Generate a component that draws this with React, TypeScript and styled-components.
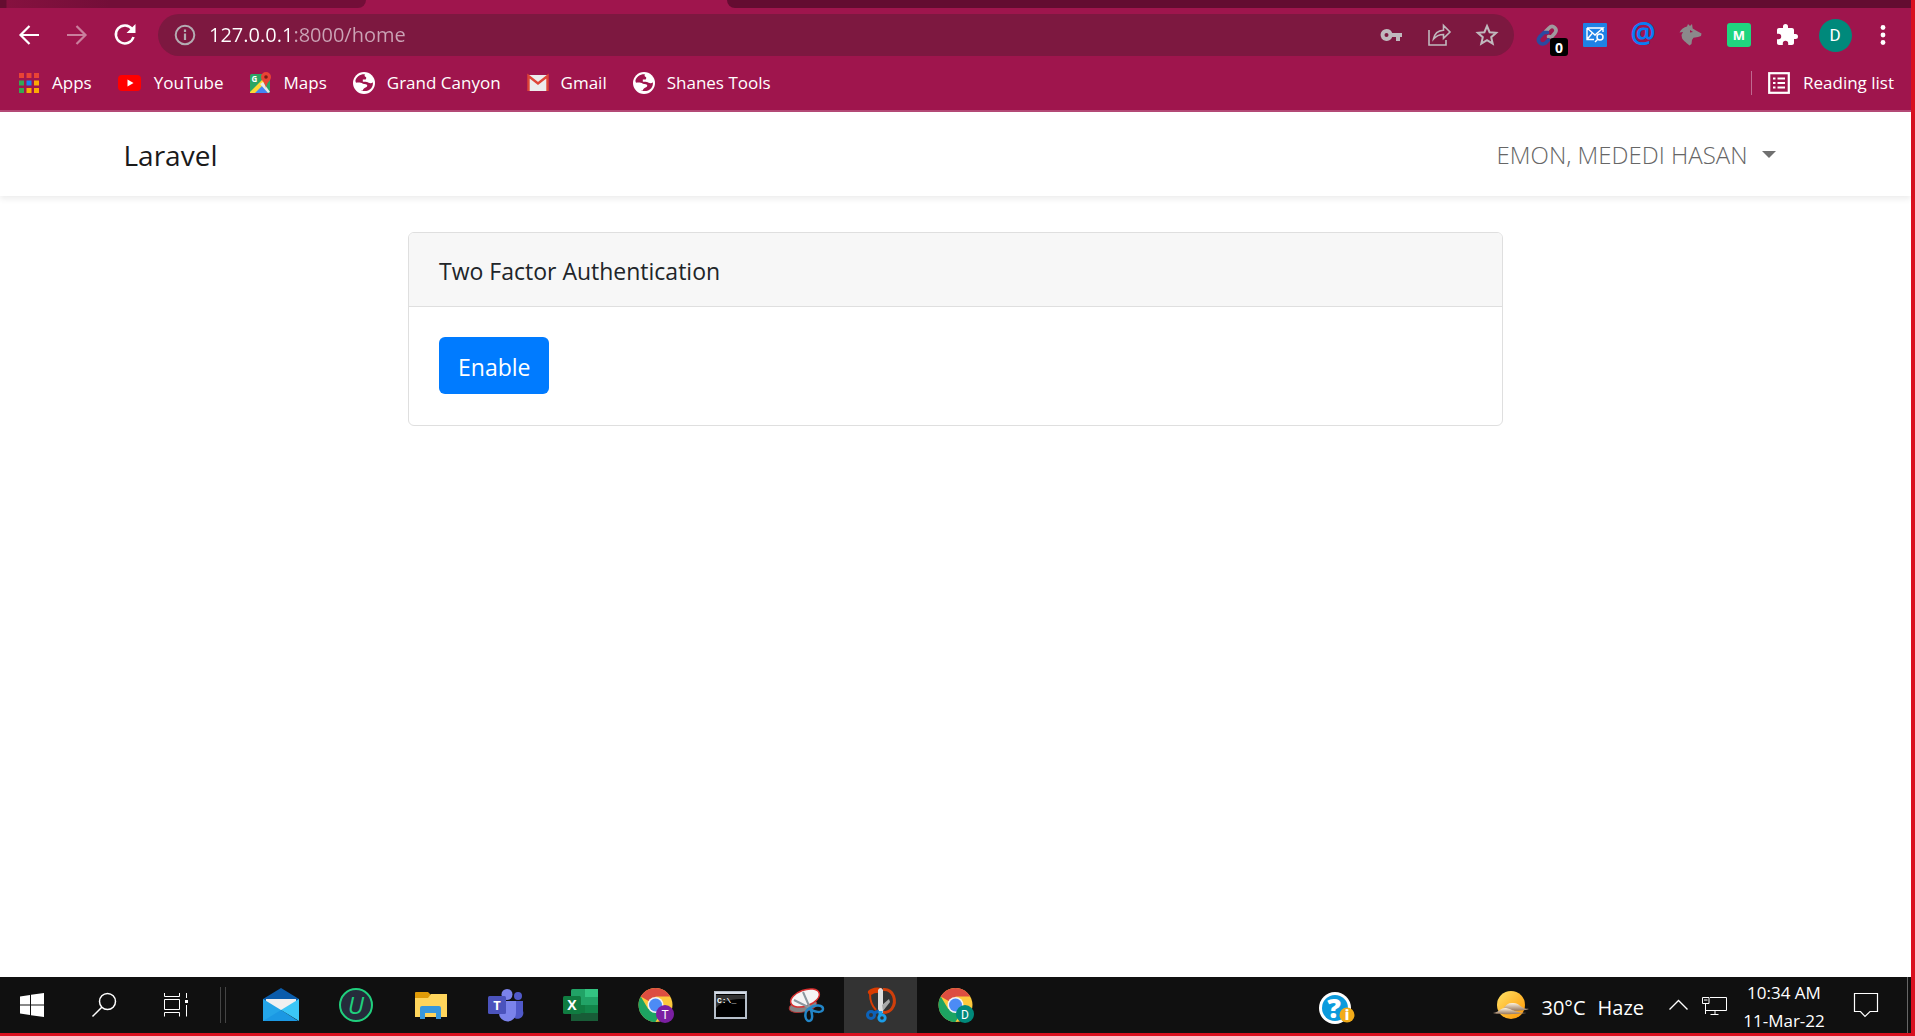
import React from "react";
import styled, { createGlobalStyle } from "styled-components";

const GlobalStyle = createGlobalStyle`
  * { box-sizing: border-box; }
  body { margin: 0; background: #fff; font-family: "Open Sans", "Noto Sans", sans-serif; }
  button { font: inherit; color: inherit; background: none; border: 0; padding: 0; cursor: pointer; }
  a { color: inherit; text-decoration: none; }
  svg { display: block; flex: none; overflow: visible; }
`;

const Screen = styled.div`
  min-height: 100vh;
  display: flex;
  flex-direction: column;
  border-right: 4px solid #d9101f;
  border-bottom: 3px solid #d9101f;
`;

/* Browser chrome */
const Chrome = styled.header`
  background: #9f154d;
  color: #fff;
  border-bottom: 2px solid #b54a77;
`;
const TabStrip = styled.div`
  display: flex;
  height: 8px;
`;
const InactiveTab = styled.div`
  width: 366px;
  background: linear-gradient(90deg, #650d30 0 6px, #86113f 7px, #730e38 110px);
  border-bottom-right-radius: 8px;
`;
const ActiveTab = styled.div`
  width: 361px;
`;
const StripRest = styled.div`
  flex: 1;
  background: #640c31;
  border-bottom-left-radius: 8px;
`;
const Toolbar = styled.div`
  display: flex;
  align-items: center;
  height: 54px;
  padding: 0 4px 0 5px;
`;
const ToolButton = styled.button<{ $dim?: boolean }>`
  width: 48px;
  height: 42px;
  display: flex;
  align-items: center;
  justify-content: center;
  position: relative;
  opacity: ${(p) => (p.$dim ? 0.45 : 1)};
`;
const Omnibox = styled.form`
  flex: 1;
  height: 42px;
  margin: 0 9px;
  padding: 0 3px 0 16px;
  border-radius: 21px;
  background: #7d1840;
  display: flex;
  align-items: center;
  color: #c2bcc0;
`;
const Address = styled.input`
  flex: 1;
  min-width: 0;
  margin-left: 13px;
  padding: 0;
  border: 0;
  outline: 0;
  font: 20px/28px "Open Sans", "Noto Sans", sans-serif;
  color: #fff;
  background: linear-gradient(90deg, #fff 0 83px, #cba3b5 83px);
  background-clip: text;
  -webkit-text-fill-color: transparent;
`;
const LinkCount = styled.span`
  position: absolute;
  right: 3px;
  bottom: 0;
  width: 18px;
  height: 18px;
  border-radius: 3px;
  background: #000;
  font: bold 14px/19px "Open Sans", sans-serif;
  text-align: center;
`;
const Avatar = styled.span`
  width: 33px;
  height: 33px;
  border-radius: 50%;
  background: #00897b;
  font: 17px/33px Roboto, sans-serif;
  text-align: center;
`;
const Bookmarks = styled.nav`
  display: flex;
  align-items: center;
  gap: 26px;
  height: 48px;
  padding: 0 17px 6px 18px;
  font-size: 17px;
  line-height: 24px;
`;
const Bookmark = styled.a`
  display: flex;
  align-items: center;
  gap: 12px;
  white-space: nowrap;
`;
const ReadingList = styled.button`
  margin-left: auto;
  height: 24px;
  padding-left: 16px;
  border-left: 1px solid #c0698f;
  display: flex;
  align-items: center;
  gap: 13px;
`;

/* Web page */
const Navbar = styled.nav`
  background: #fff;
  box-shadow: 0 3px 6px rgba(0, 0, 0, 0.075);
`;
const Container = styled.div`
  max-width: 1710px;
  margin: 0 auto;
  padding: 0 23px;
`;
const NavRow = styled(Container)`
  height: 84px;
  display: flex;
  align-items: center;
  justify-content: space-between;
  padding-top: 1px;
`;
const Brand = styled.a`
  font-size: 28px;
  line-height: 40px;
  color: #1a1a1a;
`;
const UserMenu = styled.button`
  display: flex;
  align-items: center;
  gap: 14px;
  margin-right: 12px;
  font-size: 24px;
  line-height: 36px;
  font-weight: 300;
  color: #666;
`;
const Main = styled.main`
  flex: 1;
  padding-top: 36px;
`;
const Card = styled.section`
  max-width: 1095px;
  margin: 0 auto;
  border: 1px solid #dfdfdf;
  border-radius: 6px;
  overflow: hidden;
`;
const CardHeader = styled.h1`
  margin: 0;
  padding: 20px 30px 17px;
  background: #f7f7f7;
  border-bottom: 1px solid #dfdfdf;
  font-size: 23px;
  line-height: 36px;
  font-weight: 400;
  color: #212529;
`;
const CardBody = styled.div`
  padding: 30px 30px 31px;
`;
const EnableButton = styled.button`
  height: 57px;
  padding: 2px 19px 0;
  border-radius: 6px;
  background: #007bff;
  color: #fff;
  font-size: 23px;
`;

/* Taskbar */
const Taskbar = styled.footer`
  height: 56px;
  display: flex;
  align-items: center;
  background: #101010;
  color: #fff;
`;
const SystemButtons = styled.div`
  display: flex;
  gap: 8px;
`;
const SystemButton = styled.button`
  width: 64px;
  height: 56px;
  display: grid;
  place-items: center;
`;
const Divider = styled.div`
  width: 6px;
  height: 36px;
  margin: 0 18px 0 12px;
  border: solid #444;
  border-width: 0 1px;
`;
const TaskApps = styled.div`
  display: flex;
  gap: 2px;
`;
const TaskApp = styled.button<{ $active?: boolean }>`
  width: 73px;
  height: 56px;
  display: grid;
  place-items: center;
  background: ${(p) => (p.$active ? "#333" : "transparent")};
`;
const Tray = styled.div`
  margin-left: auto;
  height: 56px;
  display: flex;
  align-items: center;
`;
const HelpButton = styled.button`
  margin-right: 138px;
  padding-top: 5px;
`;
const Weather = styled.button`
  display: flex;
  align-items: center;
  gap: 12px;
  margin-right: 25px;
  font-size: 20px;
  line-height: 28px;
  & > span { padding-top: 6px; }
`;
const TrayIcons = styled.div`
  display: flex;
  align-items: center;
  gap: 14px;
  margin-right: 15px;
`;
const Clock = styled.button`
  width: 84px;
  height: 56px;
  margin-right: 28px;
  font-size: 17px;
  line-height: 28px;
  white-space: nowrap;
  display: flex;
  flex-direction: column;
  align-items: center;
  padding-top: 2px;
`;
const ShowDesktop = styled.button`
  width: 4px;
  height: 56px;
  margin-left: 29px;
  border-left: 1px solid #666;
`;

const Svg = ({ w = 24, h, box, children }: { w?: number; h?: number; box?: string; children: React.ReactNode }) => (
  <svg width={w} height={h ?? w} viewBox={box ?? `0 0 ${w} ${h ?? w}`} fill="none" aria-hidden="true">
    {children}
  </svg>
);

const Globe = () => (
  <Svg w={22} box="0 0 24 24">
    <circle cx="12" cy="12" r="12" fill="#fff" />
    <path d="M13 2.6C8 2.2 3.800 5 2.600 9.500c.2 2.200 1.400 3 3.200 3h3.600c1.700 0 2 1.500 1.200 2.500-1.200 1.200-.2 3.200-1.700 4.900 2 1.500 8 1.500 11-2.200 1.500-2 2-4 1.800-6.500-1 1.200-2.200 1.500-3.600.9-1.500-.7-2.400-1.600-4.400-1.600h-3V8.200h2.200c1.500 0 1.500-1.300 1.500-2.300 0-1.300-2.700-.7-1.400-3.300z" fill="#9f154d" />
    <path d="M4.500 11.500c2 0 5-.2 6 1.300l3.500.6c2 .3 2.200 2.600.3 3.300-1.700.6-3.300 1.600-3.500 3.500C6 20 2.500 16 2.500 12z" fill="#fff" />
  </Svg>
);

const ChromeLogo = ({ letter, color }: { letter: string; color: string }) => (
  <Svg w={36}>
    <circle cx="17.500" cy="18" r="17" fill="#fdc93c" />
    <path d="M17.500 18 2.800 9.500A17 17 0 0 1 32.200 9.500H17.500z" fill="#dc4e41" />
    <path d="M2.800 9.500A17 17 0 0 0 17.500 35l7.300-12.800L17.500 18 10.200 22z" fill="#1da462" />
    <circle cx="17.500" cy="18" r="8" fill="#f3f3f3" />
    <circle cx="17.500" cy="18" r="6.500" fill="#4c8bf5" />
    <circle cx="27" cy="27" r="9" fill={color} />
    <text x="27" y="31.500" fontFamily="Roboto, sans-serif" fontSize="12" fill="#fff" textAnchor="middle">{letter}</text>
  </Svg>
);

const appsColors = ["#ea4335", "#ea4335", "#ea4335", "#34a853", "#1a82f0", "#fbab05", "#34a853", "#fbab05", "#fbab05"];

export default function App() {
  return (
    <Screen>
      <GlobalStyle />
      <Chrome>
        <TabStrip>
          <InactiveTab />
          <ActiveTab />
          <StripRest />
        </TabStrip>
        <Toolbar>
          <ToolButton aria-label="Back">
            <Svg w={20}><path d="M20 10H2M10.500 1 1.500 10l9 9" stroke="#fff" strokeWidth="2.200" /></Svg>
          </ToolButton>
          <ToolButton aria-label="Forward" $dim>
            <Svg w={20}><path d="M0 10h18M9.500 1l9 9-9 9" stroke="#fff" strokeWidth="2.200" /></Svg>
          </ToolButton>
          <ToolButton aria-label="Reload">
            <Svg w={22}>
              <path d="M18.200 5.200A9 9 0 1 0 19.500 13" stroke="#fff" strokeWidth="2.500" />
              <path d="M21.500 0v9h-9z" fill="#fff" />
            </Svg>
          </ToolButton>
          <Omnibox onSubmit={(e) => e.preventDefault()}>
            <Svg w={22}>
              <circle cx="11" cy="11" r="9.300" stroke="#b4acb2" strokeWidth="2" />
              <path d="M11 9.500V16M11 5.500V8" stroke="#b4acb2" strokeWidth="2.200" />
            </Svg>
            <Address aria-label="Address" defaultValue="127.0.0.1:8000/home" />
            <ToolButton type="button" aria-label="Passwords">
              <Svg w={22} h={14}>
                <path fillRule="evenodd" d="M6.500 1a6 6 0 1 0 5.700 8H16v4h4V9h2V5H12.200A6 6 0 0 0 6.500 1zm0 4a2 2 0 1 1 0 4 2 2 0 0 1 0-4z" fill="#c0b9bd" />
              </Svg>
            </ToolButton>
            <ToolButton type="button" aria-label="Share">
              <Svg w={23} h={22}>
                <path d="M1 6v15h17v-5M5.500 15C6.500 9.500 10 6.500 15.500 6.200V1.500L22 8l-6.500 6.300V10.500c-4 0-7 1-10 4.500z" stroke="#c0b9bd" strokeWidth="1.600" />
              </Svg>
            </ToolButton>
            <ToolButton type="button" aria-label="Bookmark this page">
              <Svg w={22}>
                <path d="M11 2l2.600 6.200 6.600.6-5 4.400 1.500 6.500-5.700-3.500-5.700 3.500 1.500-6.500-5-4.400 6.600-.6z" stroke="#c0b9bd" strokeWidth="2" />
              </Svg>
            </ToolButton>
          </Omnibox>
          <ToolButton aria-label="Link extension">
            <Svg w={22}>
              <g strokeWidth="3.600" strokeLinecap="round">
                <path d="M9.500 7.500 13 4c4-4 9 1 6 5l-3.500 4-3-.5" stroke="#a09a9e" />
                <path d="M11.500 8.500 8 8.500 3.500 13c-3 4 1 9 6 6l3-3" stroke="#2a4ba0" />
              </g>
            </Svg>
            <LinkCount>0</LinkCount>
          </ToolButton>
          <ToolButton aria-label="Mail finder">
            <Svg>
              <rect width="24" height="24" rx="1" fill="#1e82e6" />
              <path d="M11 16.500H4V5M4 5l8 7 8-7H4M4 16.500l5-6M20 5v4" stroke="#fff" strokeWidth="1.400" />
              <circle cx="17" cy="14" r="3" stroke="#fff" strokeWidth="1.500" />
              <path d="m15 16-3 3" stroke="#fff" strokeWidth="1.500" />
            </Svg>
          </ToolButton>
          <ToolButton aria-label="At sign extension">
            <Svg>
              <text x="12" y="20" fontFamily="Open Sans, sans-serif" fontWeight="700" fontSize="28" fill="#087cf5" textAnchor="middle">@</text>
            </Svg>
          </ToolButton>
          <ToolButton aria-label="Wolf extension">
            <Svg>
              <path d="M.5 9.500C2 6 5 4.500 8 3.500L9 1l2 2 2-2 .7 4.500 3.300 2 5.500 3-.5 2.500-3 1-4.500.8-1.500 2.200-.5 4-2 1.500C6.500 19 3.500 17 3 15l-.5-3 1.500-3z" fill="#8b898b" />
              <path d="m11 7 3 2-3 .5z" fill="#9f154d" />
            </Svg>
          </ToolButton>
          <ToolButton aria-label="M extension">
            <Svg>
              <rect width="24" height="24" rx="3" fill="#1fd57f" />
              <text x="12" y="17" fontFamily="Open Sans, sans-serif" fontWeight="700" fontSize="13" fill="#fff" textAnchor="middle">M</text>
            </Svg>
          </ToolButton>
          <ToolButton aria-label="Extensions">
            <Svg w={24} box="0 0 24 24">
              <path d="M20.500 11H19V7c0-1.100-.9-2-2-2h-4V3.500a2.500 2.500 0 0 0-5 0V5H4c-1.100 0-2 .9-2 2v3.800h1.500a2.700 2.700 0 0 1 0 5.400H2V20c0 1.100.9 2 2 2h3.800v-1.500a2.700 2.700 0 0 1 5.400 0V22H17c1.100 0 2-.9 2-2v-4h1.500a2.500 2.500 0 0 0 0-5z" fill="#fff" />
            </Svg>
          </ToolButton>
          <ToolButton aria-label="Profile"><Avatar>D</Avatar></ToolButton>
          <ToolButton aria-label="Menu">
            <Svg w={6} h={20}>
              {[2.5, 10, 17.5].map((y) => <circle key={y} cx="3" cy={y} r="2.400" fill="#fff" />)}
            </Svg>
          </ToolButton>
        </Toolbar>
        <Bookmarks>
          <Bookmark href="#apps">
            <Svg w={22}>
              {appsColors.map((c, i) => (
                <rect key={i} x={1 + (i % 3) * 7.5} y={1 + Math.floor(i / 3) * 7.5} width="5" height="5" fill={c} />
              ))}
            </Svg>
            Apps
          </Bookmark>
          <Bookmark href="#youtube">
            <Svg w={24} h={18}><rect y="1" width="23" height="16" rx="4" fill="#f00" /><path d="m9.500 5.500 6 3.500-6 3.500z" fill="#fff" /></Svg>
            YouTube
          </Bookmark>
          <Bookmark href="#maps">
            <Svg w={22}>
              <rect y="2" width="20" height="19" rx="1.500" fill="#2aa563" />
              <path d="m10 11 8 10H2z" fill="#4285f4" />
              <path d="m0 20 13-13 3 3L5 21H0z" fill="#fdd835" />
              <path d="m10 12 3-2 7 10-2 1z" fill="#e9e9e9" />
              <path d="M16 0a5 5 0 0 0-5 5c0 4 4 4 5 11 1-7 5-7 5-11a5 5 0 0 0-5-5z" fill="#e94335" />
              <circle cx="16" cy="5" r="1.800" fill="#7a1c14" />
              <text x="1.500" y="10" fontFamily="Open Sans, sans-serif" fontSize="8" fontWeight="700" fill="#fff">G</text>
            </Svg>
            Maps
          </Bookmark>
          <Bookmark href="#grand-canyon"><Globe />Grand Canyon</Bookmark>
          <Bookmark href="#gmail">
            <Svg w={22} h={18}>
              <rect x="1" y="1" width="20" height="16" rx="1" fill="#ececec" />
              <path d="M1.500 17V2L11 9.500 20.500 2v15" stroke="#df4537" strokeWidth="2.400" />
            </Svg>
            Gmail
          </Bookmark>
          <Bookmark href="#shanes-tools"><Globe />Shanes Tools</Bookmark>
          <ReadingList>
            <Svg w={22}>
              <rect x="1.200" y="1.200" width="19.600" height="19.600" stroke="#fff" strokeWidth="2.200" />
              <path d="M5 6.500h2.500M5 11h2.500M5 15.500h2.500M9.500 6.500H17M9.500 11H17M9.500 15.500H17" stroke="#fff" strokeWidth="2.200" />
            </Svg>
            Reading list
          </ReadingList>
        </Bookmarks>
      </Chrome>

      <Navbar>
        <NavRow>
          <Brand href="#home">Laravel</Brand>
          <UserMenu>
            EMON, MEDEDI HASAN
            <Svg w={14} h={7}><path d="M0 0h14L7 7z" fill="#707070" /></Svg>
          </UserMenu>
        </NavRow>
      </Navbar>
      <Main>
        <Card>
          <CardHeader>Two Factor Authentication</CardHeader>
          <CardBody><EnableButton>Enable</EnableButton></CardBody>
        </Card>
      </Main>

      <Taskbar>
        <SystemButtons>
          <SystemButton aria-label="Start">
            <Svg><path d="M0 3.500 10 2v9.500H0zM11 1.800 24 0v11.500H11zM0 12.500h10V22L0 20.500zM11 12.500h13V24l-13-1.800z" fill="#fff" /></Svg>
          </SystemButton>
          <SystemButton aria-label="Search">
            <Svg><circle cx="15.500" cy="8.500" r="8" stroke="#fff" strokeWidth="1.500" /><path d="M9.800 14.200.5 23.500" stroke="#fff" strokeWidth="1.500" /></Svg>
          </SystemButton>
          <SystemButton aria-label="Task view">
            <Svg>
              <path d="M.5 0v3.500h15V0M.5 6.500h15v10H.5zM.5 23.500v-4h15v4M22.500 0v5M22.500 12v11.500" stroke="#fff" />
              <rect x="21" y="7" width="3" height="3" fill="#fff" />
            </Svg>
          </SystemButton>
        </SystemButtons>
        <Divider />
        <TaskApps>
          <TaskApp aria-label="Mail">
            <Svg w={36} h={34}>
              <path d="M0 11 18 0l18 11v4H0z" fill="#0a5cab" />
              <path d="M3 11h30v11H3z" fill="#f0f0f0" />
              <path d="M0 11v22h35L18 22z" fill="#24a5e8" />
              <path d="M36 11v22L18 22z" fill="#3bc7f7" />
              <path d="m18 22 17 11H0z" fill="#168fe0" opacity=".6" />
            </Svg>
          </TaskApp>
          <TaskApp aria-label="Uninstaller">
            <Svg w={36}>
              <circle cx="18" cy="18" r="16" fill="#252b3b" stroke="#20cf7d" strokeWidth="2" />
              <text x="18" y="27" fontFamily="Open Sans, sans-serif" fontStyle="italic" fontSize="24" fill="#20cf7d" textAnchor="middle">U</text>
            </Svg>
          </TaskApp>
          <TaskApp aria-label="File Explorer">
            <Svg w={32} h={28}>
              <path d="M0 8V2Q0 1 1 1h12l3 3v4z" fill="#e09b07" />
              <path d="M0 7h13l3-4h16v23H0z" fill="#ffd55c" />
              <path d="M5 28V17q0-2 2-2h17q2 0 2 2v11h-5v-6H10v6z" fill="#3797dd" />
            </Svg>
          </TaskApp>
          <TaskApp aria-label="Teams">
            <Svg w={36} h={32}>
              <circle cx="19" cy="5.500" r="5.500" fill="#7b83eb" />
              <circle cx="30" cy="7" r="4" fill="#5059c9" />
              <path d="M24 12h11v10a5 5 0 0 1-11 4z" fill="#5059c9" />
              <path d="M11 12h17v12a8 8 0 0 1-17 0z" fill="#7b83eb" />
              <rect y="7" width="18" height="18" rx="1.500" fill="#4b53bc" />
              <text x="9" y="21" fontFamily="Open Sans, sans-serif" fontWeight="700" fontSize="13" fill="#fff" textAnchor="middle">T</text>
            </Svg>
          </TaskApp>
          <TaskApp aria-label="Excel">
            <Svg w={36} h={32}>
              <rect x="8" width="27" height="32" rx="1.500" fill="#21a366" />
              <path d="M22 0h13v8H22z" fill="#33c481" />
              <path d="M8 16h14v8H8z" fill="#107c41" />
              <path d="M22 16h13v8H22z" fill="#12864a" />
              <path d="M8 24h27v8H8z" fill="#185c37" />
              <rect y="7" width="18" height="18" rx="1.500" fill="#107c41" />
              <text x="9" y="21" fontFamily="Open Sans, sans-serif" fontWeight="700" fontSize="14" fill="#fff" textAnchor="middle">X</text>
            </Svg>
          </TaskApp>
          <TaskApp aria-label="Chrome, profile T"><ChromeLogo letter="T" color="#7b1fa2" /></TaskApp>
          <TaskApp aria-label="Command Prompt">
            <Svg w={33} h={28}>
              <rect x="1" y="1" width="31" height="26" fill="#000" stroke="#b5bec9" strokeWidth="2" />
              <path d="M1 1h31v2H1z" fill="#d5dce6" />
              <path d="M2 17C9 9 19 8 31 8V4H2z" fill="#333" />
              <text x="3" y="12" fontFamily="Liberation Mono, monospace" fontWeight="700" fontSize="8" fill="#fff">C:\_</text>
            </Svg>
          </TaskApp>
          <TaskApp aria-label="Snipping Tool">
            <Svg w={36} h={34}>
              <ellipse cx="15" cy="18" rx="14" ry="6" transform="rotate(-12 15 18)" fill="#858585" stroke="#a33" />
              <ellipse cx="17" cy="10" rx="15" ry="8" transform="rotate(-20 17 10)" fill="#f5f5f5" stroke="#d92f2f" strokeWidth="1.500" />
              <path d="M15 4l7 16M6 12l16 8" stroke="#8b979f" strokeWidth="2" />
              <path d="M22 20c-7 3-5 13-1 13s4-7 1-13zm0 0c5-4 13-3 13 1s-9 4-13-1z" stroke="#2286c8" strokeWidth="2.500" />
            </Svg>
          </TaskApp>
          <TaskApp aria-label="Snip and Sketch" $active>
            <Svg w={30} h={36}>
              <path d="M4 7c0 7 2 12 6 16" stroke="#d83b01" strokeWidth="2" />
              <path d="M2 4Q7-1 16 1v5Q9 5 5 8 1 7 2 4z" fill="#d83b01" />
              <path d="M17 2.500c11-1 14 12 9 19-2 3-5 4-9 4" stroke="#cf3f0b" strokeWidth="3" />
              <path d="M12 3q2.500-4 5 0v23h-5z" fill="#dedede" />
              <path d="m16 18 7-6 1 3-7 9z" fill="#aaa" />
              <circle cx="5" cy="28" r="3.500" stroke="#0d62b8" strokeWidth="3" />
              <path d="m8 26 5-2" stroke="#0d62b8" strokeWidth="3" />
              <path d="M12.500 24h4v5h-4z" fill="#1b9de8" />
              <circle cx="16" cy="31" r="3.200" stroke="#1b9de8" strokeWidth="2.800" />
            </Svg>
          </TaskApp>
          <TaskApp aria-label="Chrome, profile D"><ChromeLogo letter="D" color="#00897b" /></TaskApp>
        </TaskApps>
        <Tray>
          <HelpButton aria-label="Help">
            <Svg w={36} h={32}>
              <circle cx="16" cy="16" r="16" fill="#fff" />
              <circle cx="16" cy="16" r="13" fill="#0c9bdd" />
              <text x="15" y="26" fontFamily="Open Sans, sans-serif" fontWeight="800" fontSize="27" fill="#fff" textAnchor="middle">?</text>
              <circle cx="28" cy="23" r="7.500" fill="#f2ab19" />
              <text x="28" y="28" fontFamily="Open Sans, sans-serif" fontWeight="800" fontSize="14" fill="#fff" textAnchor="middle">i</text>
            </Svg>
          </HelpButton>
          <Weather>
            <Svg w={36} h={28}>
              <defs>
                <linearGradient id="sun" x1="0" y1="0" x2="1" y2="1"><stop stopColor="#ffe268" /><stop offset="1" stopColor="#ff9500" /></linearGradient>
                <linearGradient id="cloud" x1="0" y1="0" x2="0" y2="1"><stop stopColor="#fff4e0" /><stop offset="1" stopColor="#987960" /></linearGradient>
              </defs>
              <circle cx="18" cy="14" r="14" fill="url(#sun)" />
              <path d="M8 19c4-1 4-7 11-7 8-1 8 6 17 6-4 2-18 2-28 1z" fill="url(#cloud)" />
              <path d="M0 22c7-1 7-5 12-5 6 0 7 4 21 5-5 1-28 2-33 0z" fill="url(#cloud)" />
            </Svg>
            <span>30°C</span>
            <span>Haze</span>
          </Weather>
          <TrayIcons>
            <Svg w={19} h={10}><path d="m.5 9.500 9-9 9 9" stroke="#fff" strokeWidth="1.400" /></Svg>
            <Svg w={25} h={19}>
              <path d="M8 1.500h16.500v13H4M.5 1.500H7v6H.5zM3.500 7.500V18M2 4h3.500M13 15v3M8.500 18.500h8" stroke="#fff" />
            </Svg>
          </TrayIcons>
          <Clock><span>10:34 AM</span><span>11-Mar-22</span></Clock>
          <Svg w={24} h={24}><path d="M.5.5h23v18H16l-5 5-4.500-5h-6z" stroke="#fff" strokeWidth="1.200" /></Svg>
          <ShowDesktop aria-label="Show desktop" />
        </Tray>
      </Taskbar>
    </Screen>
  );
}
